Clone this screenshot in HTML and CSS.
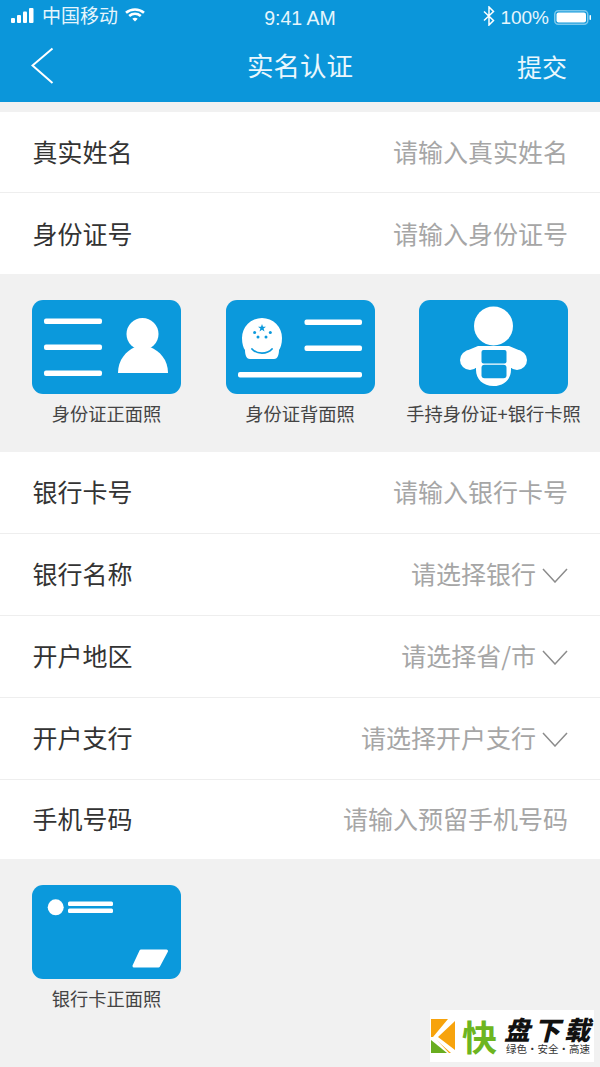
FILE: index.html
```html
<!DOCTYPE html>
<html lang="zh-CN">
<head>
<meta charset="utf-8">
<title>实名认证</title>
<link rel="stylesheet" href="styles.css">
</head>
<body>
<div class="page">
  <header class="header">
    <div class="status">
      <div class="status-left">
        <svg class="signal" width="23" height="15" viewBox="0 0 23 15"><rect x="0" y="10" width="4" height="5" rx="1"/><rect x="6" y="7" width="4" height="8" rx="1"/><rect x="12" y="3.500" width="4" height="11.500" rx="1"/><rect x="18" y="0" width="4.500" height="15" rx="1"/></svg>
        <span class="carrier">中国移动</span>
        <svg class="wifi" width="20" height="14" viewBox="0 0 20 14"><path d="M1 4.800C6 .4 14 .4 19 4.800" /><path d="M4.200 8C7.600 5.200 12.400 5.200 15.800 8"/><path d="M10 13.500 7.300 10.700C8.800 9.500 11.200 9.500 12.700 10.700Z" class="wifi-dot"/></svg>
      </div>
      <div class="time">9:41 AM</div>
      <div class="status-right">
        <svg class="bt" width="12" height="20" viewBox="0 0 12 20"><path d="M1 5.500 10.500 14.500 6 19V1L10.500 5.500 1 14.500"/></svg>
        <span class="pct">100%</span>
        <svg class="battery" width="38" height="15" viewBox="0 0 38 15"><rect class="batt-shell" x=".75" y=".75" width="33" height="13.500" rx="3.500"/><rect class="batt-fill" x="2.500" y="2.500" width="29.500" height="10" rx="2"/><rect class="batt-fill" x="35.500" y="5" width="1.500" height="5" rx=".7"/></svg>
      </div>
    </div>
    <nav class="nav">
      <svg class="back" width="24" height="38" viewBox="0 0 24 38"><path d="M21.500 1.500 1.500 18.500 21.500 36"/></svg>
      <h1 class="title">实名认证</h1>
      <span class="submit">提交</span>
    </nav>
  </header>

  <section class="group first">
    <div class="row"><span class="label">真实姓名</span><span class="hint">请输入真实姓名</span></div>
    <div class="row"><span class="label">身份证号</span><span class="hint">请输入身份证号</span></div>
  </section>

  <section class="uploads">
    <div class="upload">
      <svg class="card" viewBox="0 0 149 94"><rect class="card-bg" width="149" height="94" rx="11"/>
        <rect class="w" x="12" y="18.500" width="58" height="5.500" rx="2"/><rect class="w" x="12" y="44.500" width="58" height="5.500" rx="2"/><rect class="w" x="12" y="70.500" width="58" height="5.500" rx="2"/>
        <circle class="w" cx="110.500" cy="34" r="16"/><path class="w" d="M86 73C86 60 94 51 103 47H118C128 51 136 60 136 73Z"/></svg>
      <span class="cap">身份证正面照</span>
    </div>
    <div class="upload">
      <svg class="card" viewBox="0 0 149 94"><rect class="card-bg" width="149" height="94" rx="11"/>
        <path class="w" d="M16 38A20 20 0 0 1 56 38C56 44 54.500 48 53 50C53 54 52 59 48 59H24C20 59 19 54 19 50C17.500 48 16 44 16 38Z"/>
        <path class="b-stroke" d="M26 49C31 54.500 41 54.500 46 49"/>
        <path class="b" d="M36 24 37 26.800H40L37.600 28.500 38.500 31.400 36 29.700 33.500 31.400 34.400 28.500 32 26.800H35Z"/>
        <circle class="b" cx="28.600" cy="32.400" r="1.500"/><circle class="b" cx="44.300" cy="32.400" r="1.500"/><circle class="b" cx="32" cy="37" r="1.500"/><circle class="b" cx="40" cy="37" r="1.500"/>
        <rect class="w" x="78.500" y="19.500" width="57.500" height="5.500" rx="2"/><rect class="w" x="78.500" y="45.500" width="57.500" height="5.500" rx="2"/><rect class="w" x="12" y="72" width="124" height="5.500" rx="2"/></svg>
      <span class="cap">身份证背面照</span>
    </div>
    <div class="upload">
      <svg class="card" viewBox="0 0 149 94"><rect class="card-bg" width="149" height="94" rx="11"/>
        <circle class="w" cx="74.500" cy="26" r="19.500"/>
        <circle class="w" cx="51" cy="60" r="10"/><circle class="w" cx="98" cy="60" r="10"/>
        <path class="w" d="M47 51 59 46H90L102 51 96 68H92V70C92 79 85 86 74.500 86S57 79 57 70V68H53Z"/>
        <rect class="b" x="62.500" y="50" width="25" height="13.500" rx="2"/><rect class="b" x="62.500" y="64.800" width="25" height="13.500" rx="3"/></svg>
      <span class="cap">手持身份证+银行卡照</span>
    </div>
  </section>

  <section class="group">
    <div class="row"><span class="label">银行卡号</span><span class="hint">请输入银行卡号</span></div>
    <div class="row"><span class="label">银行名称</span><span class="pick"><span class="hint">请选择银行</span><svg class="chev" width="26" height="15" viewBox="0 0 26 15"><path d="M1 1 13 14 25 1"/></svg></span></div>
    <div class="row"><span class="label">开户地区</span><span class="pick"><span class="hint">请选择省/市</span><svg class="chev" width="26" height="15" viewBox="0 0 26 15"><path d="M1 1 13 14 25 1"/></svg></span></div>
    <div class="row"><span class="label">开户支行</span><span class="pick"><span class="hint">请选择开户支行</span><svg class="chev" width="26" height="15" viewBox="0 0 26 15"><path d="M1 1 13 14 25 1"/></svg></span></div>
    <div class="row"><span class="label">手机号码</span><span class="hint">请输入预留手机号码</span></div>
  </section>

  <section class="uploads">
    <div class="upload">
      <svg class="card" viewBox="0 0 149 94"><rect class="card-bg" width="149" height="94" rx="11"/>
        <circle class="w" cx="23.700" cy="22.300" r="8"/><rect class="w" x="36" y="16.500" width="45" height="4.500" rx="1.500"/><rect class="w" x="36" y="23.500" width="45" height="4.500" rx="1.500"/>
        <path class="w" d="M109 66H134.500L126.500 81H102Z"/><path class="w-line" d="M109 66H134.500L126.500 81H102Z"/></svg>
      <span class="cap">银行卡正面照</span>
    </div>
  </section>

  <aside class="mark">
    <svg class="mark-k" width="24" height="34" viewBox="0 0 24 34"><rect class="k-o" width="24" height="34"/><path class="k-w" d="M17 0H24V2L7 18 24 31V34H20L2 18Z"/><path class="k-w" d="M0 18H3L18 34H0Z"/><path class="k-g" d="M0 21 16 34H0Z"/></svg>
    <span class="mark-kuai">快</span>
    <div class="mark-text">
      <span class="mark-name">盘下载</span>
      <span class="mark-sub">绿色·安全·高速</span>
    </div>
  </aside>
</div>
</body>
</html>
```
FILE: styles.css
```css
* { box-sizing: border-box; }
html, body { margin: 0; padding: 0; }
body {
  font-family: "Noto Sans CJK SC", "Noto Sans", sans-serif;
  background: #f1f1f1;
}
.page {
  position: relative;
  width: 600px;
  height: 1067px;
  overflow: hidden;
  background: #f1f1f1;
}
.header {
  height: 102px;
  background: #0b96da;
  color: #fff;
  display: flex;
  flex-direction: column;
}
.status {
  height: 32px;
  padding: 0 8px 0 11px;
  display: flex;
  align-items: center;
  justify-content: space-between;
  position: relative;
}
.status-left, .status-right { display: flex; align-items: center; }
.status-left { margin-top: -2px; }
.signal { fill: #fff; }
.carrier { font-size: 19px; line-height: 24px; margin-left: 8px; color: #e6f5fc; }
.wifi { margin-left: 7px; fill: none; stroke: #fff; stroke-width: 2.600; }
.wifi-dot { fill: #fff; stroke: none; }
.time {
  position: absolute;
  left: 0;
  right: 0;
  top: 6px;
  text-align: center;
  font-family: "Liberation Sans", Arial, sans-serif;
  font-size: 19.500px;
  line-height: 24px;
  color: #e6f5fc;
}
.bt { fill: none; stroke: #fff; stroke-width: 1.500; }
.pct { font-family: "Liberation Sans", Arial, sans-serif; font-size: 19px; line-height: 24px; margin: 3px 0 0 5px; color: #e6f5fc; }
.battery { margin: 2px 0 0 5px; }
.batt-shell { fill: none; stroke: #7cc8ec; stroke-width: 1.500; }
.batt-fill { fill: #fff; }
.nav {
  flex: 1;
  display: flex;
  align-items: center;
  justify-content: space-between;
  padding: 0 33px 2px 31px;
  position: relative;
}
.back { fill: none; stroke: #fff; stroke-width: 2; }
.title {
  position: absolute;
  left: 0;
  right: 0;
  top: 15px;
  margin: 0;
  text-align: center;
  font-size: 26.500px;
  font-weight: 400;
  line-height: 36px;
  color: #eaf7fd;
}
.submit { font-size: 25px; line-height: 36px; color: #eaf7fd; }

.group { background: #fff; }
.group.first { margin-top: 10px; }
.row {
  height: 82px;
  padding: 0 32px 4px 32.500px;
  display: flex;
  align-items: center;
  justify-content: space-between;
  border-bottom: 1px solid #eeeeee;
}
.row:last-child { height: 79px; padding-bottom: 4px; border-bottom: 0; }
.first .row { height: 81px; padding-bottom: 2px; }
.label { font-size: 25px; line-height: 34px; color: #333; }
.hint { font-size: 25px; line-height: 34px; color: #a6a6a6; }
.pick { display: flex; align-items: center; gap: 6px; }
.chev { margin-top: 6px; fill: none; stroke: #8c8c8c; stroke-width: 1.500; }

.uploads {
  height: 178px;
  padding: 26px 32px 0;
  display: flex;
  justify-content: space-between;
}
.upload {
  width: 149px;
  display: flex;
  flex-direction: column;
  align-items: center;
}
.card { width: 149px; height: 94px; display: block; }
.card-bg { fill: #0b99dc; }
.w { fill: #fff; }
.w-line { fill: none; stroke: #fff; stroke-width: 3; stroke-linejoin: round; }
.b { fill: #0b99dc; }
.b-stroke { fill: none; stroke: #0b99dc; stroke-width: 1.800; stroke-linecap: round; }
.cap {
  margin-top: 6px;
  font-size: 18.300px;
  line-height: 26px;
  color: #444;
  white-space: nowrap;
}

.mark {
  position: absolute;
  left: 430px;
  top: 1010px;
  width: 164px;
  height: 52px;
  padding-left: 1px;
  background: #fff;
  display: flex;
  align-items: center;
}
.mark-k { flex: none; }
.k-o { fill: #f7a30c; }
.k-g { fill: #69ad1f; }
.k-w { fill: #fff; }
.mark-kuai {
  margin-left: 7px;
  width: 36px;
  font-size: 35px;
  line-height: 40px;
  font-weight: 700;
  color: #6db520;
}
.mark-text {
  margin-left: 7px;
  display: flex;
  flex-direction: column;
  align-items: flex-start;
}
.mark-name {
  font-size: 26px;
  line-height: 26px;
  font-weight: 900;
  font-style: italic;
  letter-spacing: 4px;
  color: #111;
  white-space: nowrap;
}
.mark-sub {
  font-size: 10.500px;
  line-height: 14px;
  color: #333;
  white-space: nowrap;
  margin-left: 2px;
}
```
